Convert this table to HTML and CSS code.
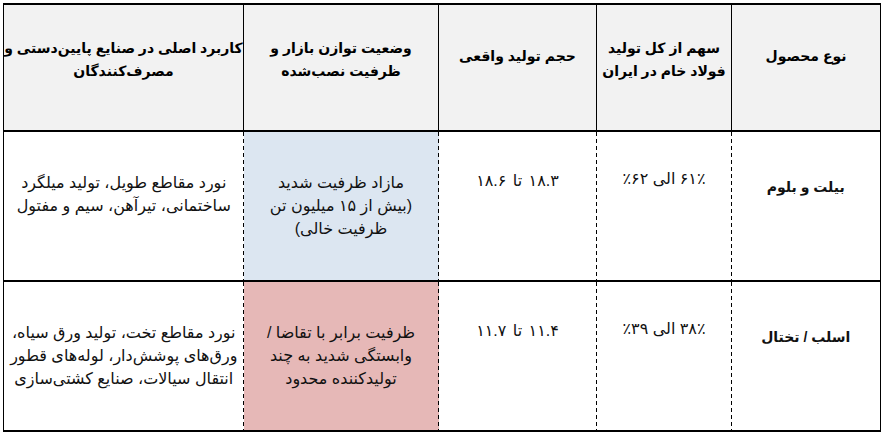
FILE: index.html
```html
<!DOCTYPE html>
<html lang="fa" dir="rtl">
<head>
<meta charset="utf-8">
<title>جدول</title>
<link rel="stylesheet" href="styles.css">
</head>
<body>
<div class="wrap">
<table class="grid">
  <colgroup>
    <col class="c-product">
    <col class="c-share">
    <col class="c-volume">
    <col class="c-status">
    <col class="c-usage">
  </colgroup>
  <thead>
    <tr class="head">
      <th class="h-single">نوع محصول</th>
      <th>سهم از کل تولید<br>فولاد خام در ایران</th>
      <th class="h-single">حجم تولید واقعی</th>
      <th>وضعیت توازن بازار و<br>ظرفیت نصب‌شده</th>
      <th class="h-wide">کاربرد اصلی در صنایع پایین‌دستی و<br>مصرف‌کنندگان</th>
    </tr>
  </thead>
  <tbody>
    <tr class="row r1">
      <td class="product">بیلت و بلوم</td>
      <td class="share dash">۶۱٪ الی ۶۲٪</td>
      <td class="volume dash">۱۸.۳ تا ۱۸.۶</td>
      <td class="status dash blue">مازاد ظرفیت شدید<br>(بیش از ۱۵ میلیون تن<br>ظرفیت خالی)</td>
      <td class="usage dash">نورد مقاطع طویل، تولید میلگرد<br>ساختمانی، تیرآهن، سیم و مفتول</td>
    </tr>
    <tr class="row r2">
      <td class="product">اسلب / تختال</td>
      <td class="share dash">۳۸٪ الی ۳۹٪</td>
      <td class="volume dash">۱۱.۴ تا ۱۱.۷</td>
      <td class="status dash pink">ظرفیت برابر با تقاضا /<br>وابستگی شدید به چند<br>تولیدکننده محدود</td>
      <td class="usage dash">نورد مقاطع تخت، تولید ورق سیاه،<br>ورق‌های پوشش‌دار، لوله‌های قطور<br>انتقال سیالات، صنایع کشتی‌سازی</td>
    </tr>
  </tbody>
</table>
</div>
</body>
</html>
```

FILE: styles.css
```css
html, body {
  margin: 0;
  padding: 0;
  background: #ffffff;
}

.wrap {
  padding: 3px 4px 0 4px;
  width: 877px;
}

.grid {
  border-collapse: collapse;
  table-layout: fixed;
  width: 877px;
  font-family: "Liberation Sans", Arial, "DejaVu Sans", sans-serif;
  font-size: 16px;
  line-height: 23px;
  color: #111;
}

.c-product { width: 149px; }
.c-share { width: 135px; }
.c-volume { width: 158px; }
.c-status { width: 195px; }
.c-usage { width: 240px; }

.grid th,
.grid td {
  padding: 0;
  text-align: center;
  white-space: nowrap;
  overflow: visible;
}

.head {
  height: 127px;
}

.head th {
  background: #f2f2f2;
  font-size: 14px;
  font-weight: bold;
  color: #000;
  vertical-align: middle;
  padding-bottom: 16px;
  border: 1px solid #000;
  border-top-width: 2px;
  border-bottom-width: 2px;
}

.head .h-single {
  padding-bottom: 22px;
}

.row {
  height: 150px;
}

.row td {
  vertical-align: top;
  padding-top: 39px;
  border-top: 2px solid #000;
  border-bottom: 2px solid #000;
  border-left: 0;
  border-right: 0;
}

.row td.product {
  border-right: 1px solid #000;
  font-weight: bold;
  font-size: 14px;
  padding-top: 44px;
}

.row td.usage {
  border-left: 1px solid #000;
}

.row td.share {
  padding-top: 35px;
}

.row td.volume {
  padding-top: 37px;
  word-spacing: 2px;
}

.row td.dash {
  background-image: repeating-linear-gradient(to bottom, #000 0, #000 4px, transparent 4px, transparent 7px);
  background-size: 1px 100%;
  background-position: right top;
  background-repeat: no-repeat;
}

.blue { background-color: #dce6f1; }
.pink { background-color: #e6b8b7; }
```
